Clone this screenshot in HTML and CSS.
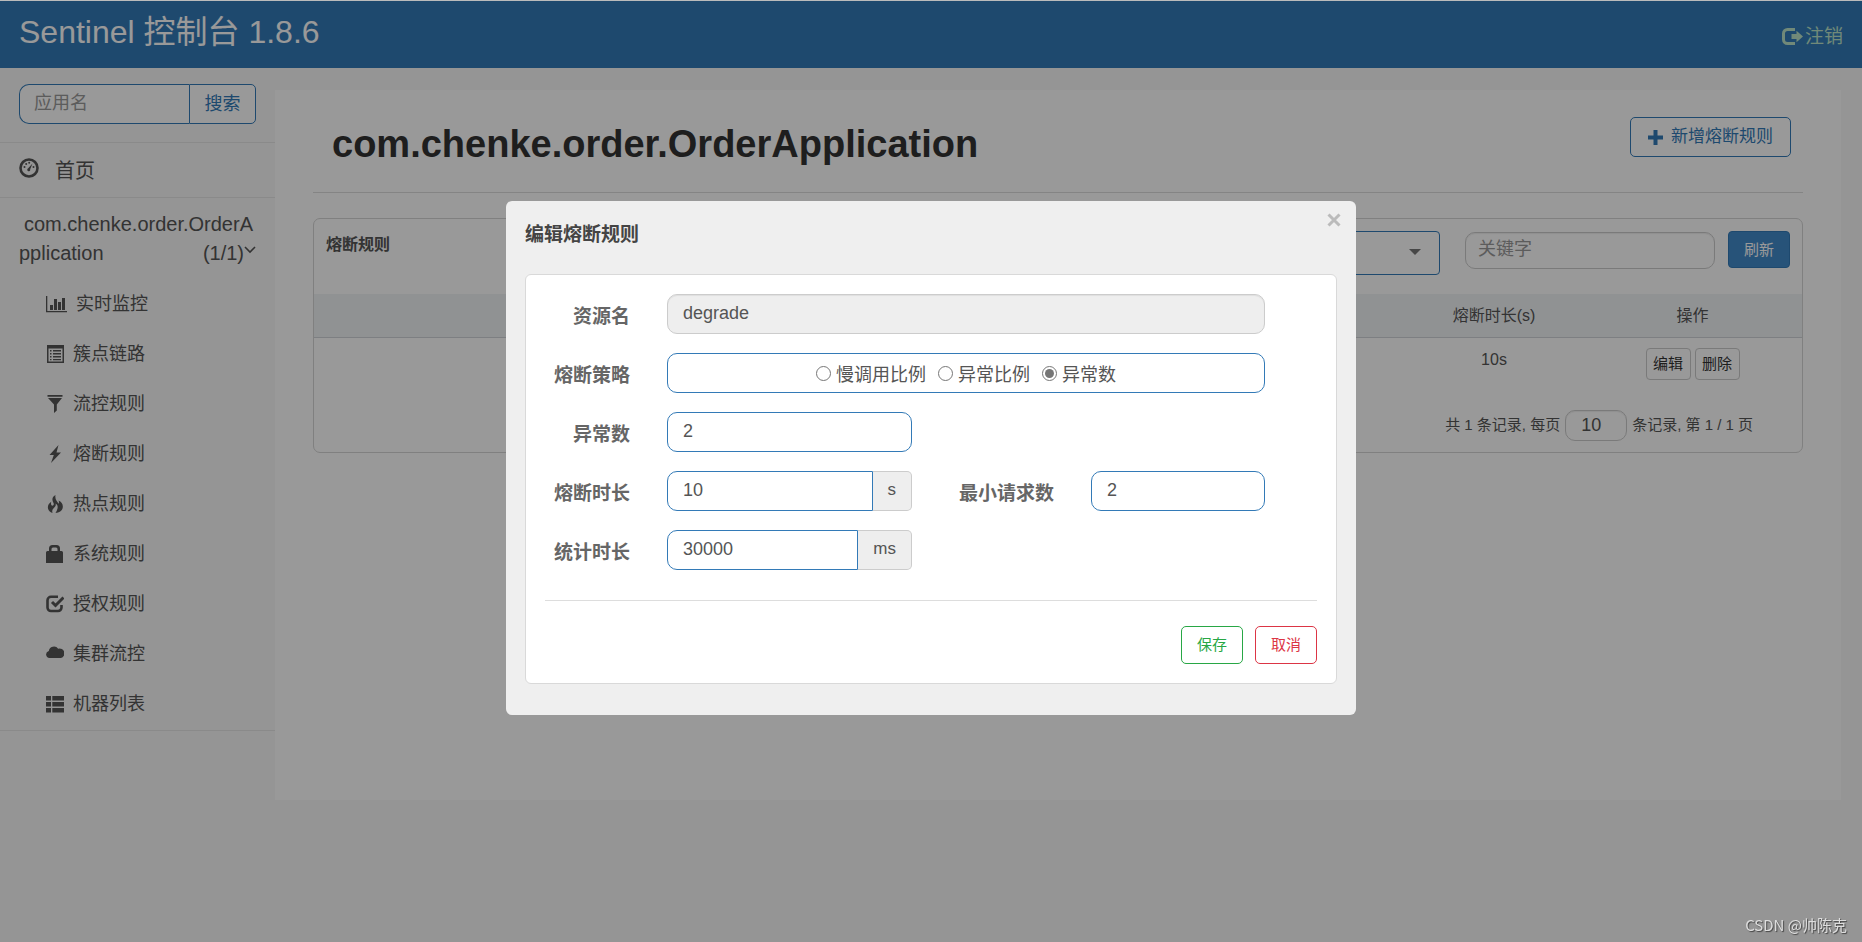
FILE: index.html
```html
<!DOCTYPE html>
<html lang="zh-CN">
<head>
<meta charset="utf-8">
<title>Sentinel 控制台</title>
<link rel="stylesheet" href="styles.css">
</head>
<body>
<header class="topbar">
  <span class="brand">Sentinel 控制台 1.8.6</span>
  <a class="logout" href="#"><svg class="icon-logout" viewBox="0 0 21 17" aria-hidden="true"><path fill="none" stroke="currentColor" stroke-width="3" d="M13 1.5H5.500A4 4 0 0 0 1.500 5.500v6a4 4 0 0 0 4 4H13"/><path fill="currentColor" d="M9.500 6h5V2.800L21 8.500l-6.500 5.700V11h-5z"/></svg>注销</a>
</header>
<div class="layout">
  <nav class="sidebar">
    <form class="search">
      <input class="search-input" type="text" placeholder="应用名" aria-label="应用名">
      <button class="search-btn" type="button">搜索</button>
    </form>
    <a class="home" href="#"><svg class="icon-home" viewBox="0 0 20 20" aria-hidden="true"><circle cx="10" cy="10" r="8.500" fill="none" stroke="currentColor" stroke-width="2.600"/><path d="M13.500 5.500l-2.300 5.800a1.500 1.500 0 1 1-2-1z" fill="currentColor"/><g fill="currentColor"><circle cx="5.500" cy="9" r="1"/><circle cx="7.200" cy="6" r="1"/><circle cx="10.200" cy="4.800" r="1"/><circle cx="14.500" cy="9" r="1"/></g></svg>首页</a>
    <div class="group">
      <a class="app" href="#"><span class="app-name">com.chenke.order.OrderA<br>pplication</span><span class="app-count">(1/1)<svg class="icon-chev" viewBox="0 0 12 8" aria-hidden="true"><path d="M1 1l5 5 5-5" fill="none" stroke="currentColor" stroke-width="1.600"/></svg></span></a>
      <a class="item item-wide" href="#"><svg class="icon" viewBox="0 0 21 18" aria-hidden="true"><path fill="currentColor" d="M0 1h1.300v15H21v1.300H0zM4 10h3v5H4zM8 4h3v11H8zM12 7h3v8h-3zM16 3h3v12h-3z"/></svg>实时监控</a>
      <a class="item" href="#"><svg class="icon" viewBox="0 0 18 18" aria-hidden="true"><path fill="currentColor" fill-rule="evenodd" d="M1 0h17v18H1zM2.500 3.500v13h14v-13z"/><path fill="currentColor" d="M4 5h1.500v1.500H4zM7 5h8v1.500H7zM4 8h1.500v1.500H4zM7 8h8v1.500H7zM4 11h1.500v1.500H4zM7 11h8v1.500H7zM4 14h1.500v1.300H4zM7 14h8v1.300H7z"/></svg>簇点链路</a>
      <a class="item" href="#"><svg class="icon" viewBox="0 0 18 18" aria-hidden="true"><path fill="currentColor" d="M1.500 0h15v1.800h-15zM2 3h14l-5.200 6.500v6L8 18V9.500z"/></svg>流控规则</a>
      <a class="item" href="#"><svg class="icon" viewBox="0 0 18 18" aria-hidden="true"><path fill="currentColor" d="M12.500 0L3.500 10h4.300L5 18l10-10.500h-4.500z"/></svg>熔断规则</a>
      <a class="item" href="#"><svg class="icon" viewBox="0 0 18 18" aria-hidden="true"><path fill="currentColor" d="M9.500 0C5.500 2 6 5.500 7.500 8c1 2-1 3.500-2 2.200C4.800 9.200 5 7.800 5.300 6.800 2.500 8.500 1.500 11 2 13.500c.5 2.300 2 3.700 4.500 4.500-.8-2.500.2-4 1.800-5.500C10 11 10 9.500 9.500 8.500c2 1.200 2.500 3 2 5-.3 1.500-1 3-2 4.500 4-.2 7-2.500 7.300-5.800.3-3-1.300-5.400-4.300-6.700.7 1.200.5 2.500 0 3.200C11.500 6.500 8.500 4.500 9.500 0z"/></svg>热点规则</a>
      <a class="item" href="#"><svg class="icon" viewBox="0 0 18 18" aria-hidden="true"><path fill="currentColor" d="M1.500 6H3V3.500A3.500 3.500 0 0 1 6.500 0h4A3.500 3.500 0 0 1 14 3.500V6h1.500A1.500 1.500 0 0 1 17 7.500V18H0V7.500A1.500 1.500 0 0 1 1.500 6zm4 0h6V4a1.500 1.500 0 0 0-1.500-1.500H7A1.500 1.500 0 0 0 5.500 4z"/></svg>系统规则</a>
      <a class="item" href="#"><svg class="icon" viewBox="0 0 18 18" aria-hidden="true"><path d="M12 1.800H5A3.500 3.500 0 0 0 1.500 5.300v7.200A3.500 3.500 0 0 0 5 16h7a3.500 3.500 0 0 0 3.500-3.500V10" fill="none" stroke="currentColor" stroke-width="2.600"/><path d="M6 7l3.500 3.500 8-8" fill="none" stroke="currentColor" stroke-width="3"/></svg>授权规则</a>
      <a class="item" href="#"><svg class="icon" viewBox="0 0 18 18" aria-hidden="true"><path fill="currentColor" d="M3.500 13A3.500 3.500 0 0 1 2.800 6.100 5.200 5.200 0 0 1 12.200 3.700 4.800 4.800 0 0 1 15 13z"/></svg>集群流控</a>
      <a class="item" href="#"><svg class="icon" viewBox="0 0 18 18" aria-hidden="true"><path fill="currentColor" d="M0 1h5v4.500H0zM6.300 1H18v4.500H6.300zM0 7h5v4.500H0zM6.300 7H18v4.500H6.300zM0 13h5v4.500H0zM6.300 13H18v4.500H6.300z"/></svg>机器列表</a>
    </div>
  </nav>
  <main class="main">
    <div class="page-head">
      <h1 class="page-title">com.chenke.order.OrderApplication</h1>
      <button class="add-btn" type="button"><svg class="icon-plus" viewBox="0 0 15 15" aria-hidden="true"><path fill="currentColor" d="M5.500 0h4v5.500H15v4H9.500V15h-4V9.500H0v-4h5.500z"/></svg>新增熔断规则</button>
    </div>
    <section class="card">
      <div class="card-head">
        <span class="card-title">熔断规则</span>
        <span class="select-wrap"><select class="machine" aria-label="机器"><option></option></select><span class="caret"></span></span>
        <input class="keyword" type="text" placeholder="关键字" aria-label="关键字">
        <button class="refresh" type="button">刷新</button>
      </div>
      <table class="rules">
        <thead><tr><th></th><th class="col-time">熔断时长(s)</th><th class="col-ops">操作</th></tr></thead>
        <tbody><tr><td></td><td>10s</td><td><div class="ops"><button class="mini" type="button">编辑</button><button class="mini" type="button">删除</button></div></td></tr></tbody>
      </table>
      <div class="pager">
        <label for="size">共 1 条记录, 每页</label>
        <input class="page-size" id="size" type="text" value="10">
        <span>条记录, 第 1 / 1 页</span>
      </div>
    </section>
  </main>
</div>
<div class="overlay">
  <div class="modal" role="dialog" aria-modal="true" aria-labelledby="dlg-title">
    <button class="close" type="button" aria-label="关闭"><svg class="icon-close" viewBox="0 0 14 14" aria-hidden="true"><path d="M1.500 1.500l11 11M12.500 1.500l-11 11" stroke="currentColor" stroke-width="3"/></svg></button>
    <h2 class="modal-title" id="dlg-title">编辑熔断规则</h2>
    <form class="panel">
      <div class="rows">
        <div class="row">
          <label class="label" for="res">资源名</label>
          <input class="field field-off wide" id="res" type="text" value="degrade" readonly>
        </div>
        <div class="row">
          <span class="label" id="strategy">熔断策略</span>
          <div class="field radios wide" role="radiogroup" aria-labelledby="strategy">
            <label class="radio"><input class="dot" type="radio" name="g"><span>慢调用比例</span></label>
            <label class="radio"><input class="dot" type="radio" name="g"><span>异常比例</span></label>
            <label class="radio"><input class="dot" type="radio" name="g" checked><span>异常数</span></label>
          </div>
        </div>
        <div class="row">
          <label class="label" for="count">异常数</label>
          <input class="field" id="count" type="text" value="2">
        </div>
        <div class="row">
          <label class="label" for="time">熔断时长</label>
          <div class="addon-group"><input class="field joined" id="time" type="text" value="10"><span class="addon">s</span></div>
          <label class="label" for="min">最小请求数</label>
          <input class="field" id="min" type="text" value="2">
        </div>
        <div class="row">
          <label class="label" for="stat">统计时长</label>
          <div class="addon-group"><input class="field joined" id="stat" type="text" value="30000"><span class="addon">ms</span></div>
        </div>
      </div>
      <div class="actions">
        <button class="act save" type="button">保存</button>
        <button class="act cancel" type="button">取消</button>
      </div>
    </form>
  </div>
</div>
<div class="watermark">CSDN @帅陈克</div>
</body>
</html>
```
FILE: styles.css
```css
* { box-sizing: border-box; }
body {
  margin: 0;
  min-height: 100vh;
  border-top: 1px solid #bbb;
  background: #f8f8f8;
  color: #555;
  font: 17px/24px "Liberation Sans", "Noto Sans CJK SC", sans-serif;
}
button, input, select { font: inherit; color: inherit; }
input, select { min-width: 0; }
a { color: inherit; text-decoration: none; }
svg { flex: none; }

.topbar {
  display: flex;
  align-items: center;
  justify-content: space-between;
  height: 67px;
  padding: 0 19px;
  background: #337ab7;
}
.brand { color: #fff; font-size: 32px; line-height: 40px; padding-bottom: 5px; }
.logout {
  display: flex;
  align-items: center;
  gap: 2px;
  padding-top: 4px;
  color: #bce4ca;
  font-size: 19px;
}
.icon-logout { width: 21px; height: 17px; }

.layout { display: flex; align-items: flex-start; }
.sidebar { width: 275px; flex: none; }
.search {
  display: flex;
  padding: 16px 19px 18px;
  border-bottom: 1px solid #e7e7e7;
}
.search-input {
  flex: 1;
  height: 40px;
  padding: 0 14px 2px;
  border: 1px solid #337ab7;
  border-right: 0;
  border-radius: 10px 0 0 10px;
  background: #fff;
  font-size: 18px;
}
::placeholder { color: #999; opacity: 1; }
.search-btn {
  width: 67px;
  height: 40px;
  padding: 0;
  border: 1px solid #337ab7;
  border-radius: 0 5px 5px 0;
  background: #fff;
  color: #337ab7;
  font-size: 18px;
}
.home {
  display: flex;
  align-items: center;
  gap: 16px;
  height: 55px;
  padding: 1px 19px 0;
  border-bottom: 1px solid #e7e7e7;
  font-size: 20px;
}
.icon-home { width: 20px; height: 20px; margin-bottom: 5px; }
.group { padding: 12px 0 1px; border-bottom: 1px solid #e7e7e7; }
.app {
  display: flex;
  align-items: flex-end;
  justify-content: space-between;
  padding: 0 19px;
  margin-bottom: 11px;
  font-size: 20px;
  line-height: 29px;
}
.app-name { text-indent: 5px; white-space: nowrap; width: 0; }
.icon-chev { width: 12px; height: 8px; margin-bottom: 6px; }
.item {
  display: flex;
  align-items: center;
  gap: 9px;
  height: 50px;
  padding-left: 46px;
  font-size: 18px;
}
.icon { width: 18px; height: 18px; }
.item-wide .icon { width: 21px; }

.main {
  flex: 1;
  min-width: 0;
  min-height: 710px;
  margin: 22px 21px 0 0;
  padding: 0 38px;
  background: #fff;
}
.page-head {
  display: flex;
  align-items: flex-start;
  justify-content: space-between;
  height: 103px;
  padding: 27px 12px 0 19px;
  margin-bottom: 25px;
  border-bottom: 1px solid #ddd;
}
.page-title { margin: 0; padding-top: 5px; color: #333; font-size: 38px; line-height: 44px; }
.add-btn {
  display: flex;
  align-items: center;
  justify-content: center;
  gap: 8px;
  width: 161px;
  height: 40px;
  padding: 0;
  border: 1px solid #337ab7;
  border-radius: 5px;
  background: #fff;
  color: #337ab7;
  font-size: 17px;
}
.icon-plus { width: 15px; height: 15px; }
.card { border: 1px solid #d5d5d5; border-radius: 7px; }
.card-head {
  display: flex;
  align-items: flex-start;
  height: 75px;
  padding: 12px 12px 0;
}
.card-title { flex: 1; font-size: 16px; font-weight: bold; line-height: 28px; }
.select-wrap { position: relative; width: 300px; margin-right: 25px; }
.machine {
  display: block;
  width: 100%;
  height: 44px;
  border: 1px solid #337ab7;
  border-radius: 4px;
  background: #fff;
  appearance: none;
}
.caret {
  position: absolute;
  right: 19px;
  top: 18px;
  border: 6px solid transparent;
  border-top-color: #777;
  border-bottom: 0;
}
.keyword {
  width: 250px;
  height: 37px;
  margin: 1px 13px 0 0;
  padding: 0 12px 2px;
  border: 1px solid #ccc;
  border-radius: 10px;
  font-size: 18px;
  box-shadow: inset 0 1px 1px #0001;
}
.refresh {
  width: 62px;
  height: 37px;
  padding: 0;
  border: 1px solid #337ab7;
  border-radius: 4px;
  background: #428bca;
  color: #fff;
  font-size: 15px;
}
.rules { width: 100%; border-collapse: collapse; table-layout: fixed; font-size: 16px; text-align: center; }
.rules th {
  height: 43px;
  padding: 2px 0 0;
  border-bottom: 1px solid #d0d4d9;
  background: #f1f4f6;
  font-weight: normal;
}
.rules td { padding: 10px 0 0; vertical-align: top; line-height: 24px; }
.col-time { width: 178px; }
.col-ops { width: 219px; }
.ops { display: flex; justify-content: center; gap: 4px; }
.mini {
  width: 45px;
  height: 32px;
  padding: 0;
  border: 1px solid #ccc;
  border-radius: 4px;
  background: #fff;
  color: #333;
  font-size: 15px;
}
.pager {
  display: flex;
  align-items: center;
  justify-content: flex-end;
  gap: 5px;
  padding: 30px 49px 11px;
  font-size: 15px;
}
.page-size {
  width: 62px;
  height: 31px;
  padding: 0 15px;
  border: 1px solid #ccc;
  border-radius: 10px;
  font-size: 18px;
  box-shadow: inset 0 1px 1px #0001;
}

.overlay {
  position: fixed;
  inset: 1px 0 0;
  padding-top: 200px;
  background: rgba(0, 0, 0, 0.4);
}
.modal {
  position: relative;
  max-width: 850px;
  margin: 0 auto;
  padding: 20px 19px 31px;
  border-radius: 6px;
  background: #efefef;
}
.modal-title { margin: 0 0 25px; color: #444; font-size: 19px; line-height: 28px; }
.close {
  position: absolute;
  top: 12px;
  right: 15px;
  display: flex;
  padding: 0;
  border: 0;
  background: none;
  color: #bbb;
}
.icon-close { width: 14px; height: 14px; }
.panel { padding: 19px; border: 1px solid #d9d9d9; border-radius: 6px; background: #fff; }
.rows {
  display: grid;
  gap: 19px;
  padding: 0 52px 30px 0;
  border-bottom: 1px solid #ddd;
}
.row {
  display: grid;
  grid-template-columns: 86px 245px 107px 1fr;
  column-gap: 36px;
  align-items: center;
}
.wide { grid-column: 2 / -1; }
.label {
  padding: 5px 1px 0 0;
  color: #666;
  font-size: 19px;
  font-weight: bold;
  text-align: right;
  white-space: nowrap;
}
.field {
  width: 100%;
  height: 40px;
  padding: 0 15px 2px;
  border: 1px solid #337ab7;
  border-radius: 10px;
  background: #fff;
  font-size: 18px;
}
.field-off { border-color: #ccc; background: #eee; box-shadow: inset 0 1px 1px #0001; }
.radios { display: flex; align-items: center; justify-content: center; gap: 12px; padding: 4px 0 0; }
.radio { display: flex; align-items: center; gap: 5px; }
.dot { width: 15px; height: 15px; margin: 0 0 3px; accent-color: #767676; }
.addon-group { display: flex; }
.joined { flex: 1; border-radius: 10px 0 0 10px; }
.addon {
  height: 40px;
  padding: 0 15px;
  border: 1px solid #ccc;
  border-left: 0;
  border-radius: 0 5px 5px 0;
  background: #eee;
  line-height: 36px;
}
.actions { display: flex; justify-content: flex-end; gap: 12px; padding-top: 25px; }
.act {
  width: 62px;
  height: 38px;
  padding: 0;
  border: 1px solid;
  border-radius: 5px;
  background: #fff;
  font-size: 15px;
}
.save { color: #28a745; }
.cancel { color: #dc3545; }
.watermark {
  position: fixed;
  right: 15px;
  bottom: 6px;
  color: #ddd;
  font: 15px/22px "Noto Sans CJK SC", sans-serif;
  text-shadow: 1px 1px 1px #444;
}
```
